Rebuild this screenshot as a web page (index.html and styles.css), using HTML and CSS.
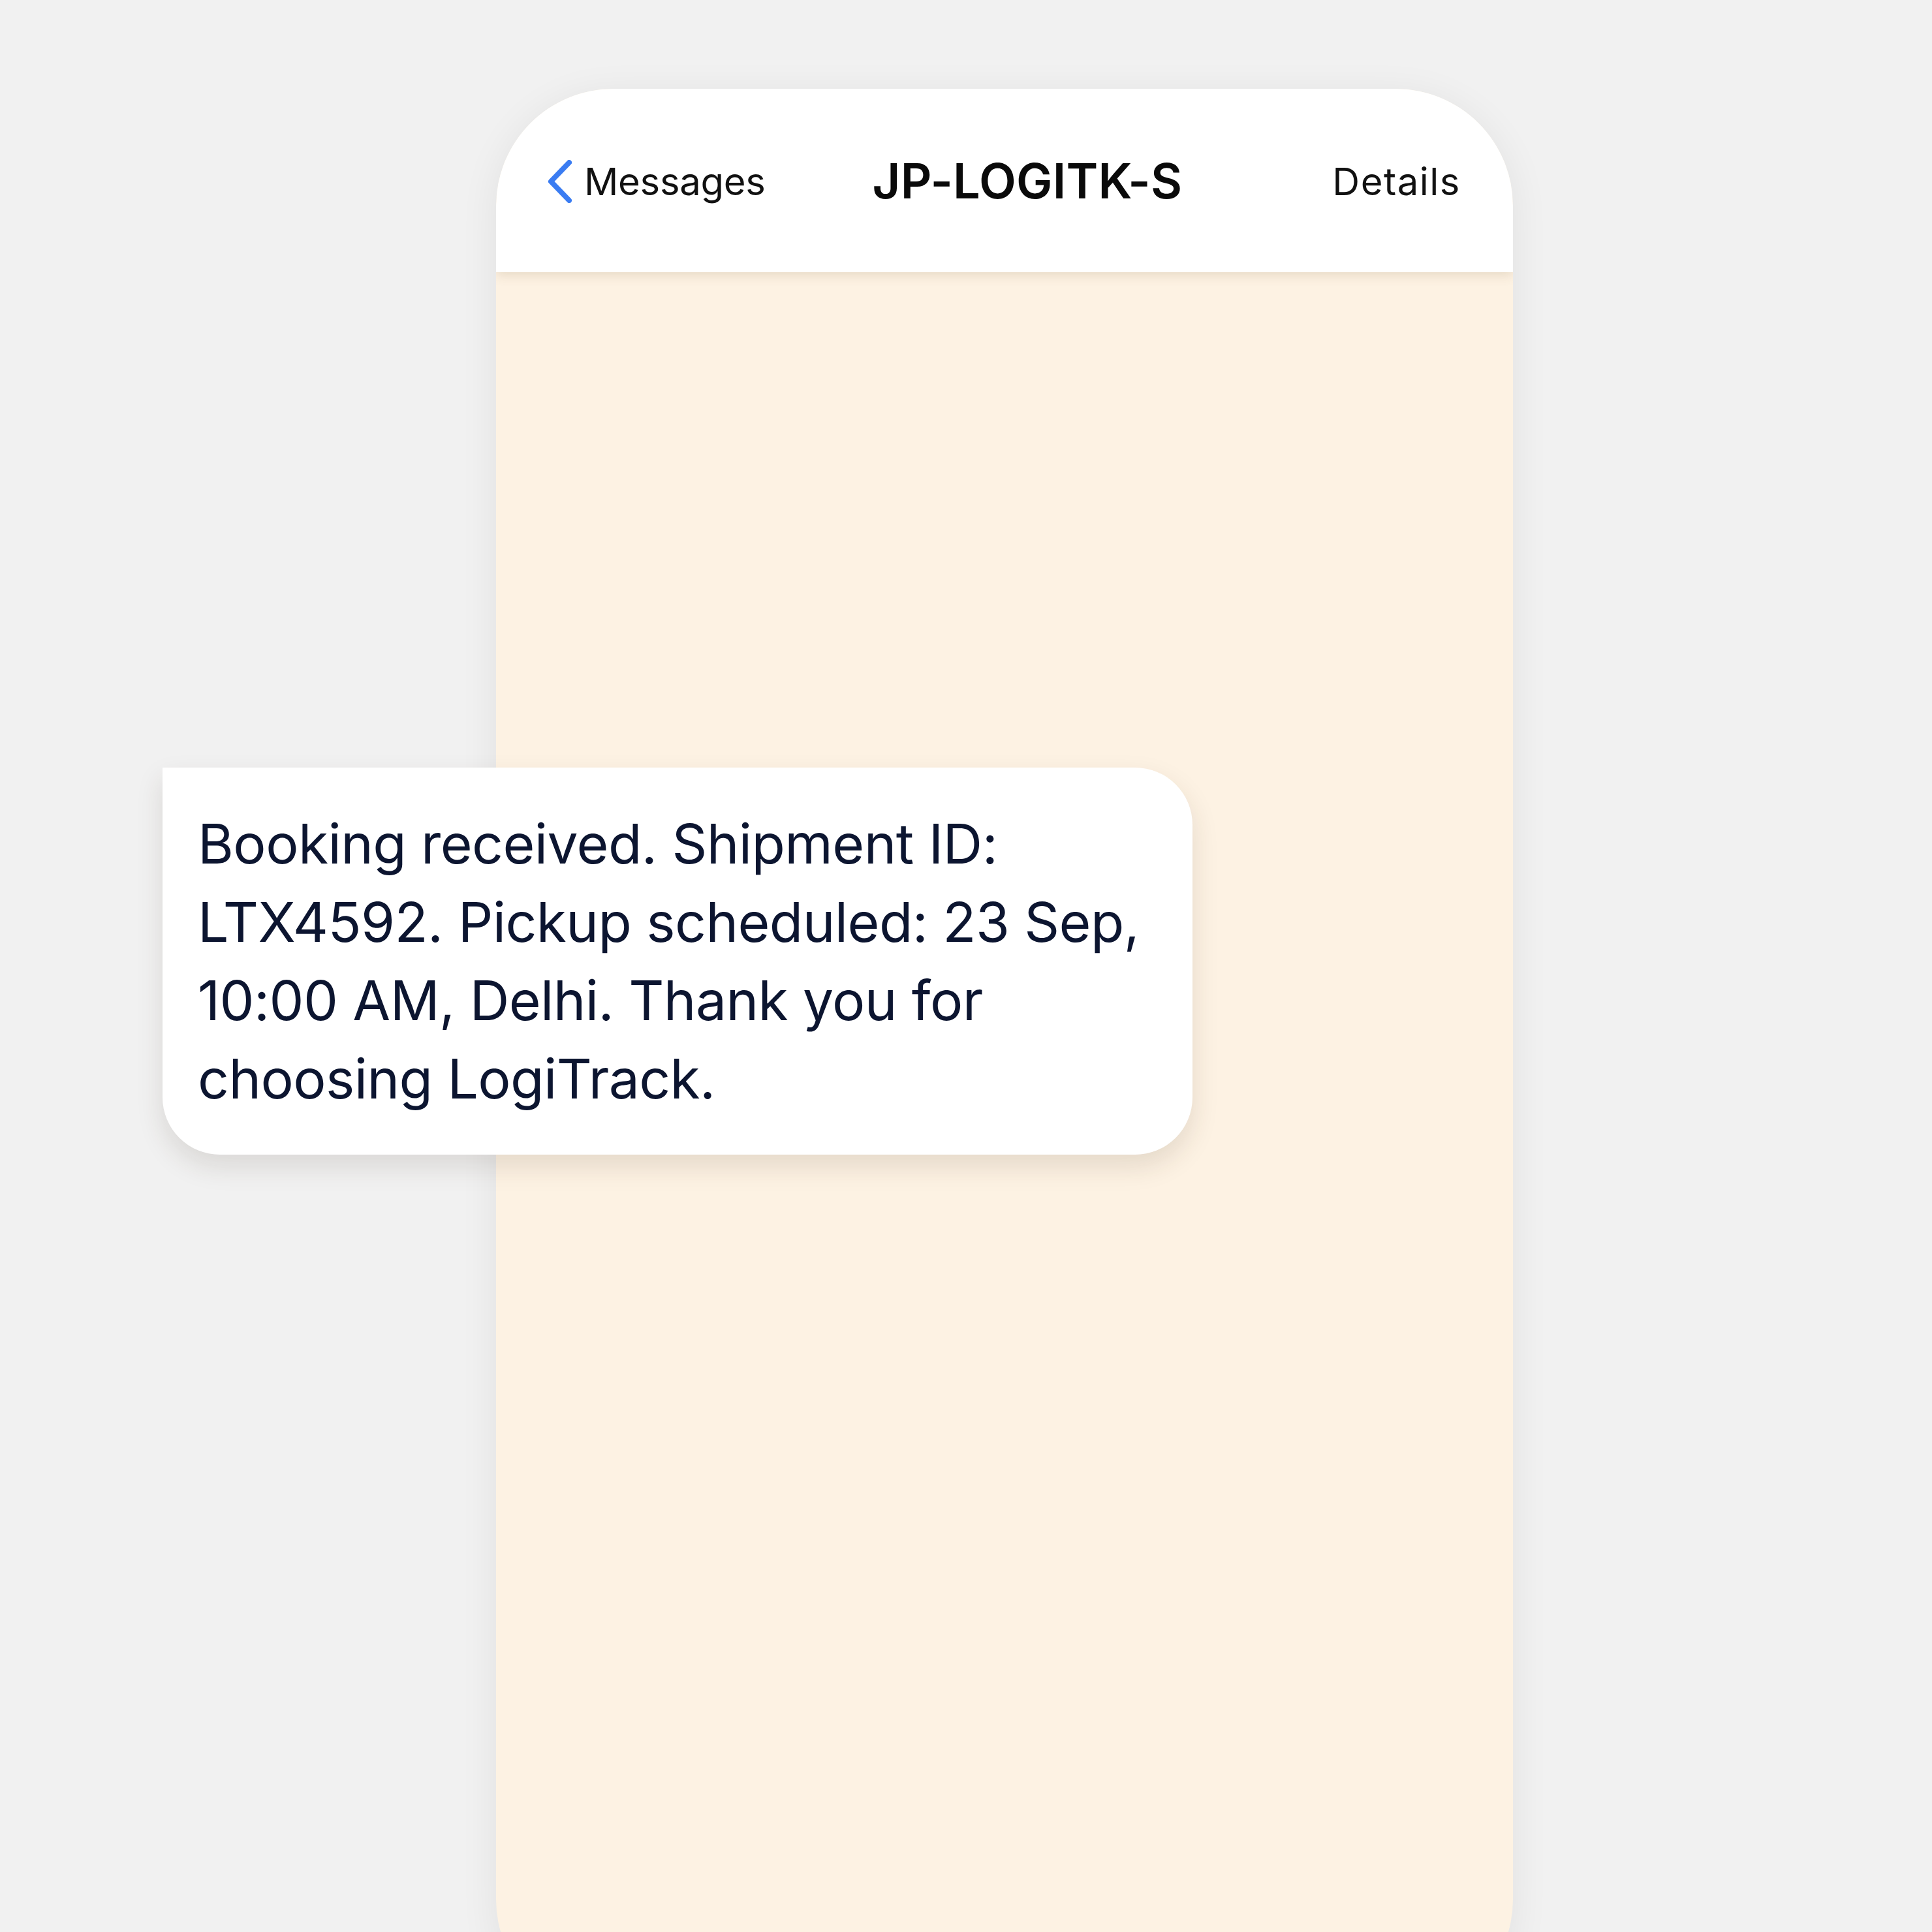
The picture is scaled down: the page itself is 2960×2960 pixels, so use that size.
FILE: index.html
```html
<!DOCTYPE html>
<html lang="en">
<head>
<meta charset="utf-8">
<title>JP-LOGITK-S</title>
<link rel="stylesheet" href="styles.css">
</head>
<body>
<div class="stage">
  <div class="phone">
    <header class="bar">
      <a class="back">
        <svg class="chev" viewBox="0 0 40 66" width="40" height="66"><path d="M34 4 L6 33 L34 62" fill="none" stroke="#3a7cf2" stroke-width="8" stroke-linecap="round" stroke-linejoin="round"/></svg>
        <span class="back-label">Messages</span>
      </a>
      <div class="title">JP-LOGITK-S</div>
      <div class="details">Details</div>
    </header>
    <main class="thread"></main>
  </div>
  <div class="bubble">
    <p class="msg">Booking received. Shipment ID:<br>LTX4592. Pickup scheduled: 23 Sep,<br>10:00 AM, Delhi. Thank you for<br>choosing LogiTrack.</p>
  </div>
</div>
</body>
</html>
```
FILE: styles.css
```css
html, body {
  margin: 0;
  padding: 0;
  height: 100%;
  overflow: hidden;
}
body {
  background: #f1f1f1;
  font-family: Inter, "Noto Sans", "Liberation Sans", sans-serif;
}
.stage {
  position: relative;
  width: 2960px;
  height: 2960px;
  padding-top: 136px;
  box-sizing: border-box;
}
.phone {
  margin-left: 760px;
  width: 1558px;
  height: 2954px;
  border-radius: 180px;
  overflow: hidden;
  background: #fdf2e3;
  display: flex;
  flex-direction: column;
  box-shadow: 0 10px 60px rgba(0, 0, 0, 0.07);
}
.bar {
  position: relative;
  z-index: 1;
  height: 281px;
  flex: none;
  background: #ffffff;
  display: flex;
  align-items: center;
  padding: 0 80px 0 78px;
  box-shadow: 0 5px 16px rgba(120, 95, 50, 0.16);
}
.back {
  display: flex;
  align-items: center;
  gap: 17px;
  color: #111;
}
.chev {
  display: block;
  margin-top: 2px;
}
.back-label {
  font-size: 58px;
  font-weight: 400;
  letter-spacing: -0.3px;
  color: #111;
  margin-top: 3px;
}
.title {
  margin-left: 164px;
  font-size: 74px;
  font-weight: 600;
  color: #0a0a0a;
  letter-spacing: 0.2px;
}
.details {
  margin-left: auto;
  font-size: 58px;
  font-weight: 400;
  color: #111;
  letter-spacing: 1.5px;
  margin-top: 3px;
}
.thread {
  flex: 1;
}
.bubble {
  position: absolute;
  left: 249px;
  top: 1176px;
  width: 1578px;
  height: 593px;
  box-sizing: border-box;
  background: #ffffff;
  border-radius: 0 88px 88px 88px;
  padding: 57px 40px 0 54px;
  box-shadow: 0 18px 40px rgba(60, 50, 30, 0.13);
}
.msg {
  margin: 0;
  font-size: 84px;
  line-height: 120px;
  color: #0c1530;
  letter-spacing: -0.6px;
  white-space: nowrap;
}
```
